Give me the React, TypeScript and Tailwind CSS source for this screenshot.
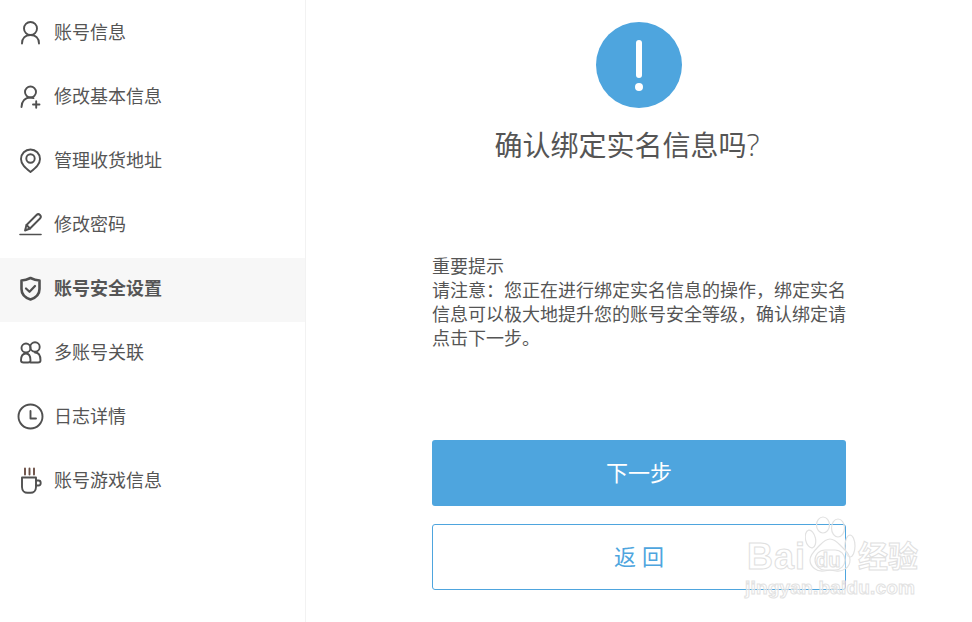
const FONT = "font-['Liberation_Sans','Noto_Sans_CJK_SC',sans-serif]";

const icons: Record<string, React.ReactNode> = {
  user: (
    <>
      <circle cx="15.500" cy="11.500" r="6.500" />
      <path d="M7 26.500c0-5.500 3.500-8.500 8.500-8.500s8.500 3 8.500 8.500" />
    </>
  ),
  userPlus: (
    <>
      <circle cx="15.500" cy="11" r="5.500" />
      <path d="M6.500 26c0-5.500 3.500-9.500 9-9.500 1 0 2 .2 3 .6" />
      <path d="M18 23.500h6.500M21.200 20.200v6.500" />
    </>
  ),
  pin: (
    <>
      <path d="M15.500 27c-5-4-9.500-7.500-9.500-13a9.500 9.500 0 0 1 19 0c0 5.500-4.500 9-9.500 13z" />
      <circle cx="15.500" cy="13.500" r="4.200" />
    </>
  ),
  pen: (
    <>
      <path d="M5 25.500h21" strokeWidth="1.600" />
      <path d="M10 21.500l1.500-5.500L21.500 6c1-1 2.500-1 3.500 0s1 2.500 0 3.500L15 19.500z" />
      <path d="M11.500 16l3.500 3.500" />
    </>
  ),
  shield: (
    <>
      <path d="M15.500 5c3 1.500 5.500 2.300 9 2.500v8.500c0 5.500-3.800 8.800-9 10.500-5.200-1.700-9-5-9-10.500V7.500c3.500-.2 6-1 9-2.500z" strokeWidth="2.600" />
      <path d="M11 15.500l3.500 3.300 5.500-5.800" strokeWidth="2.200" />
    </>
  ),
  people: (
    <>
      <circle cx="11" cy="11" r="4.500" />
      <circle cx="20" cy="10" r="4.700" />
      <path d="M8.500 25.500c-1.500 0-2.500-.5-2.500-2 0-4 1.500-7 5-7s4.500 3 4.500 7c0 1.500-1 2-2.500 2z" />
      <path d="M15.500 25.500h7.500c1.500 0 2.500-.5 2.500-2 0-4-1.500-8-5.500-8" />
    </>
  ),
  clock: (
    <>
      <circle cx="15.500" cy="15.500" r="12" />
      <path d="M15.500 10v7.500h5.500" />
    </>
  ),
  cup: (
    <>
      <path d="M7 12.500h14v9.500c0 3.500-2.500 5.800-5.500 5.800h-3c-3 0-5.500-2.300-5.500-5.800z" />
      <path d="M21 15.500h2.500c1.500 0 2.200 1 2.200 2.500s-.7 2.500-2.200 2.500H21" />
      <path d="M10 3.500v6M14.500 3.500v6M19 3.500v6" stroke="#6b4f45" />
    </>
  ),
};

const MENU = [
  { key: "user", label: "账号信息" },
  { key: "userPlus", label: "修改基本信息" },
  { key: "pin", label: "管理收货地址" },
  { key: "pen", label: "修改密码" },
  { key: "shield", label: "账号安全设置", active: true },
  { key: "people", label: "多账号关联" },
  { key: "clock", label: "日志详情" },
  { key: "cup", label: "账号游戏信息" },
];

function Watermark() {
  return (
    <div className={`pointer-events-none absolute left-[745px] top-[515px] h-[90px] w-[180px] ${FONT}`}>
      <svg className="absolute left-[60px] top-0" width="52" height="62" viewBox="0 0 52 62" fill="none" stroke="#e2e2e2" strokeWidth="1.200">
        <ellipse cx="5.500" cy="24" rx="5" ry="9" transform="rotate(-12 5.500 24)" />
        <ellipse cx="18" cy="10" rx="6.500" ry="8" />
        <ellipse cx="33" cy="13" rx="6.500" ry="9" />
        <ellipse cx="45" cy="31" rx="5" ry="11" />
        <path d="M25 24c5 0 8 4 12 8 5 5 8 8 8 13 0 8-8 12-14 11-4-1-8-1-12 0-7 1-14-4-14-11 0-5 4-9 8-13 4-4 7-8 12-8z" fill="#ffffff" fillOpacity="0.4" />
        <rect x="10" y="35" width="30" height="20" rx="10" />
      </svg>
      <span className="absolute left-[2px] top-[22px] text-[36px] leading-[40px] font-bold tracking-[1px] text-white/50 [-webkit-text-stroke:1px_#e0e0e0]">Bai</span>
      <span className="absolute left-[71px] top-[33px] text-[20px] leading-[24px] font-bold text-white/50 [-webkit-text-stroke:1px_#e0e0e0]">du</span>
      <span className="absolute left-[113px] top-[22px] text-[30px] leading-[40px] font-bold text-white/50 [-webkit-text-stroke:1px_#e0e0e0]">经验</span>
      <span className="absolute left-0 top-[61px] text-[19px] leading-[24px] font-bold tracking-[0.2px] text-white/50 [-webkit-text-stroke:1px_#e2e2e2]">jingyan.baidu.com</span>
    </div>
  );
}

export default function App() {
  return (
    <div className={`relative flex h-[622px] w-[972px] overflow-hidden bg-white text-[#555555] ${FONT}`}>
      <aside className="h-full w-[306px] shrink-0 border-r border-[#f2f2f2] pt-[2px]">
        {MENU.map((m) => (
          <div
            key={m.label}
            className={`flex h-16 items-start pt-[17px] ${m.active ? "bg-[#f7f7f7] font-bold" : ""}`}
          >
            <svg
              className="ml-[15px] h-[30px] w-[30px] shrink-0 -translate-y-[2px]"
              viewBox="0 0 30 30"
              fill="none"
              stroke="#505050"
              strokeWidth="1.900"
              strokeLinecap="round"
              strokeLinejoin="round"
            >
              {icons[m.key]}
            </svg>
            <span className="ml-[9px] text-[18px] leading-[28px]">{m.label}</span>
          </div>
        ))}
      </aside>

      <main className="flex flex-1 flex-col items-center pt-[22px]">
        <div className="flex h-[86px] w-[86px] flex-col items-center justify-center rounded-full bg-[#4ea5de]">
          <div className="h-[38px] w-[6px] rounded-full bg-white" />
          <div className="mt-[5px] h-[8px] w-[8px] rounded-full bg-white" />
        </div>
        <h1 className="mt-[19px] h-[40px] pr-[24px] text-[28px] leading-[40px] font-normal">
          确认绑定实名信息吗<span className="text-[31px] leading-none font-['Open_Sans'] font-light">?</span>
        </h1>

        <div className="mt-[88px] w-[414px] text-[18px] leading-[24px]">
          <p>重要提示</p>
          <p>请注意：您正在进行绑定实名信息的操作，绑定实名信息可以极大地提升您的账号安全等级，确认绑定请点击下一步。</p>
        </div>

        <button className="mt-[89px] h-[66px] w-[414px] rounded-[3px] bg-[#4ea5de] text-[22px] text-white">
          下一步
        </button>
        <button className="mt-[18px] h-[66px] w-[414px] rounded-[3px] border border-[#4ea5de] bg-white pl-[6px] text-[22px] tracking-[6px] text-[#4ea5de]">
          返回
        </button>
      </main>

      <Watermark />
    </div>
  );
}
